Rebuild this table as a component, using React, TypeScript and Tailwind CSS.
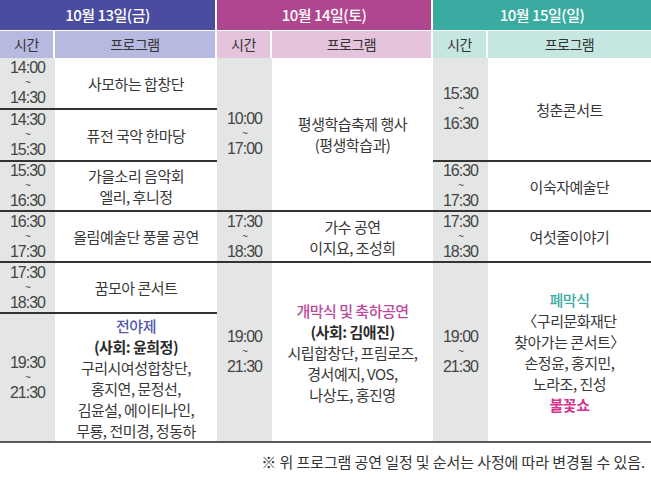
import type { ReactNode } from "react";

type Slot = {
  start: string;
  end: string;
  h: string;
  last?: boolean;
  body: ReactNode;
};

type Day = {
  title: string;
  w: string;
  head: string;
  sub: string;
  gap: string;
  slots: Slot[];
};

const days: Day[] = [
  {
    title: "10월 13일(금)",
    w: "w-[217px]",
    head: "bg-[#4a4c9f]",
    sub: "bg-[#b8b9e0]",
    gap: "pr-[2px]",
    slots: [
      { start: "14:00", end: "14:30", h: "h-[52px]", body: <p>사모하는 합창단</p> },
      { start: "14:30", end: "15:30", h: "h-[52px]", body: <p>퓨전 국악 한마당</p> },
      {
        start: "15:30",
        end: "16:30",
        h: "h-[50px]",
        body: (
          <>
            <p>가을소리 음악회</p>
            <p>엘리, 후니정</p>
          </>
        ),
      },
      { start: "16:30", end: "17:30", h: "h-[51px]", body: <p>올림예술단 풍물 공연</p> },
      { start: "17:30", end: "18:30", h: "h-[51px]", body: <p>꿈모아 콘서트</p> },
      {
        start: "19:30",
        end: "21:30",
        h: "h-[129px]",
        last: true,
        body: (
          <>
            <p className="font-medium text-[#5557b0]">전야제</p>
            <p className="font-bold text-[#2a2a2a]">(사회: 윤희정)</p>
            <p>구리시여성합창단,</p>
            <p>홍지연, 문정선,</p>
            <p>김윤설, 에이티나인,</p>
            <p>무룡, 전미경, 정동하</p>
          </>
        ),
      },
    ],
  },
  {
    title: "10월 14일(토)",
    w: "w-[216px]",
    head: "bg-[#b0468f]",
    sub: "bg-[#e5c3dc]",
    gap: "pr-[2px]",
    slots: [
      {
        start: "10:00",
        end: "17:00",
        h: "h-[154px]",
        body: (
          <>
            <p>평생학습축제 행사</p>
            <p>(평생학습과)</p>
          </>
        ),
      },
      {
        start: "17:30",
        end: "18:30",
        h: "h-[51px]",
        body: (
          <>
            <p>가수 공연</p>
            <p>이지요, 조성희</p>
          </>
        ),
      },
      {
        start: "19:00",
        end: "21:30",
        h: "h-[180px]",
        last: true,
        body: (
          <>
            <p className="font-medium text-[#bb4a9c]">개막식 및 축하공연</p>
            <p className="font-bold text-[#2a2a2a]">(사회: 김애진)</p>
            <p>시립합창단, 프림로즈,</p>
            <p>경서예지, VOS,</p>
            <p>나상도, 홍진영</p>
          </>
        ),
      },
    ],
  },
  {
    title: "10월 15일(일)",
    w: "w-[218px]",
    head: "bg-[#3aaba1]",
    sub: "bg-[#c6e6e1]",
    gap: "",
    slots: [
      { start: "15:30", end: "16:30", h: "h-[104px]", body: <p>청춘콘서트</p> },
      { start: "16:30", end: "17:30", h: "h-[50px]", body: <p>이숙자예술단</p> },
      { start: "17:30", end: "18:30", h: "h-[51px]", body: <p>여섯줄이야기</p> },
      {
        start: "19:00",
        end: "21:30",
        h: "h-[180px]",
        last: true,
        body: (
          <>
            <p className="font-medium text-[#3aaca2]">폐막식</p>
            <p>〈구리문화재단</p>
            <p>찾아가는 콘서트〉</p>
            <p>손정윤, 홍지민,</p>
            <p>노라조, 진성</p>
            <p className="font-bold text-[#d3348f]">불꽃쇼</p>
          </>
        ),
      },
    ],
  },
];

function DayColumn({ day }: { day: Day }) {
  return (
    <div className={`${day.w} flex flex-col`}>
      <div className={`${day.gap} flex flex-col gap-px`}>
        <div
          className={`${day.head} h-[30px] flex items-center justify-center text-white text-[15px] font-medium tracking-[-0.5px]`}
        >
          {day.title}
        </div>
        <div className="h-[27px] flex gap-[2px] text-[14px] text-[#333] tracking-[-0.5px]">
          <div className={`${day.sub} w-[53px] flex items-center justify-center`}>시간</div>
          <div className={`${day.sub} flex-1 flex items-center justify-center`}>프로그램</div>
        </div>
      </div>
      {day.slots.map((s, i) => (
        <div
          key={i}
          className={`${s.h} flex border-b-2 ${s.last ? "border-[#5a5a5a]" : "border-[#333]"}`}
        >
          <div className="w-[55px] bg-[#e4e6e5] flex flex-col items-center justify-center text-[#444] font-['Liberation_Sans',sans-serif] tracking-[-1px]">
            <span className="text-[16px] leading-[18px]">{s.start}</span>
            <span className="text-[10px] leading-[12px]">~</span>
            <span className="text-[16px] leading-[18px]">{s.end}</span>
          </div>
          <div className="flex-1 flex flex-col items-center justify-center text-center text-[15px] leading-[21px] tracking-[-0.5px] text-[#383838]">
            {s.body}
          </div>
        </div>
      ))}
    </div>
  );
}

export default function App() {
  return (
    <div className="w-[651px] h-[480px] bg-white overflow-hidden font-['Noto_Sans_CJK_KR','Noto_Sans',sans-serif]">
      <div className="flex">
        {days.map((d) => (
          <DayColumn key={d.title} day={d} />
        ))}
      </div>
      <p className="pt-[8px] pr-[6px] text-right text-[15px] tracking-[-0.1px] text-[#333]">
        ※ 위 프로그램 공연 일정 및 순서는 사정에 따라 변경될 수 있음.
      </p>
    </div>
  );
}
